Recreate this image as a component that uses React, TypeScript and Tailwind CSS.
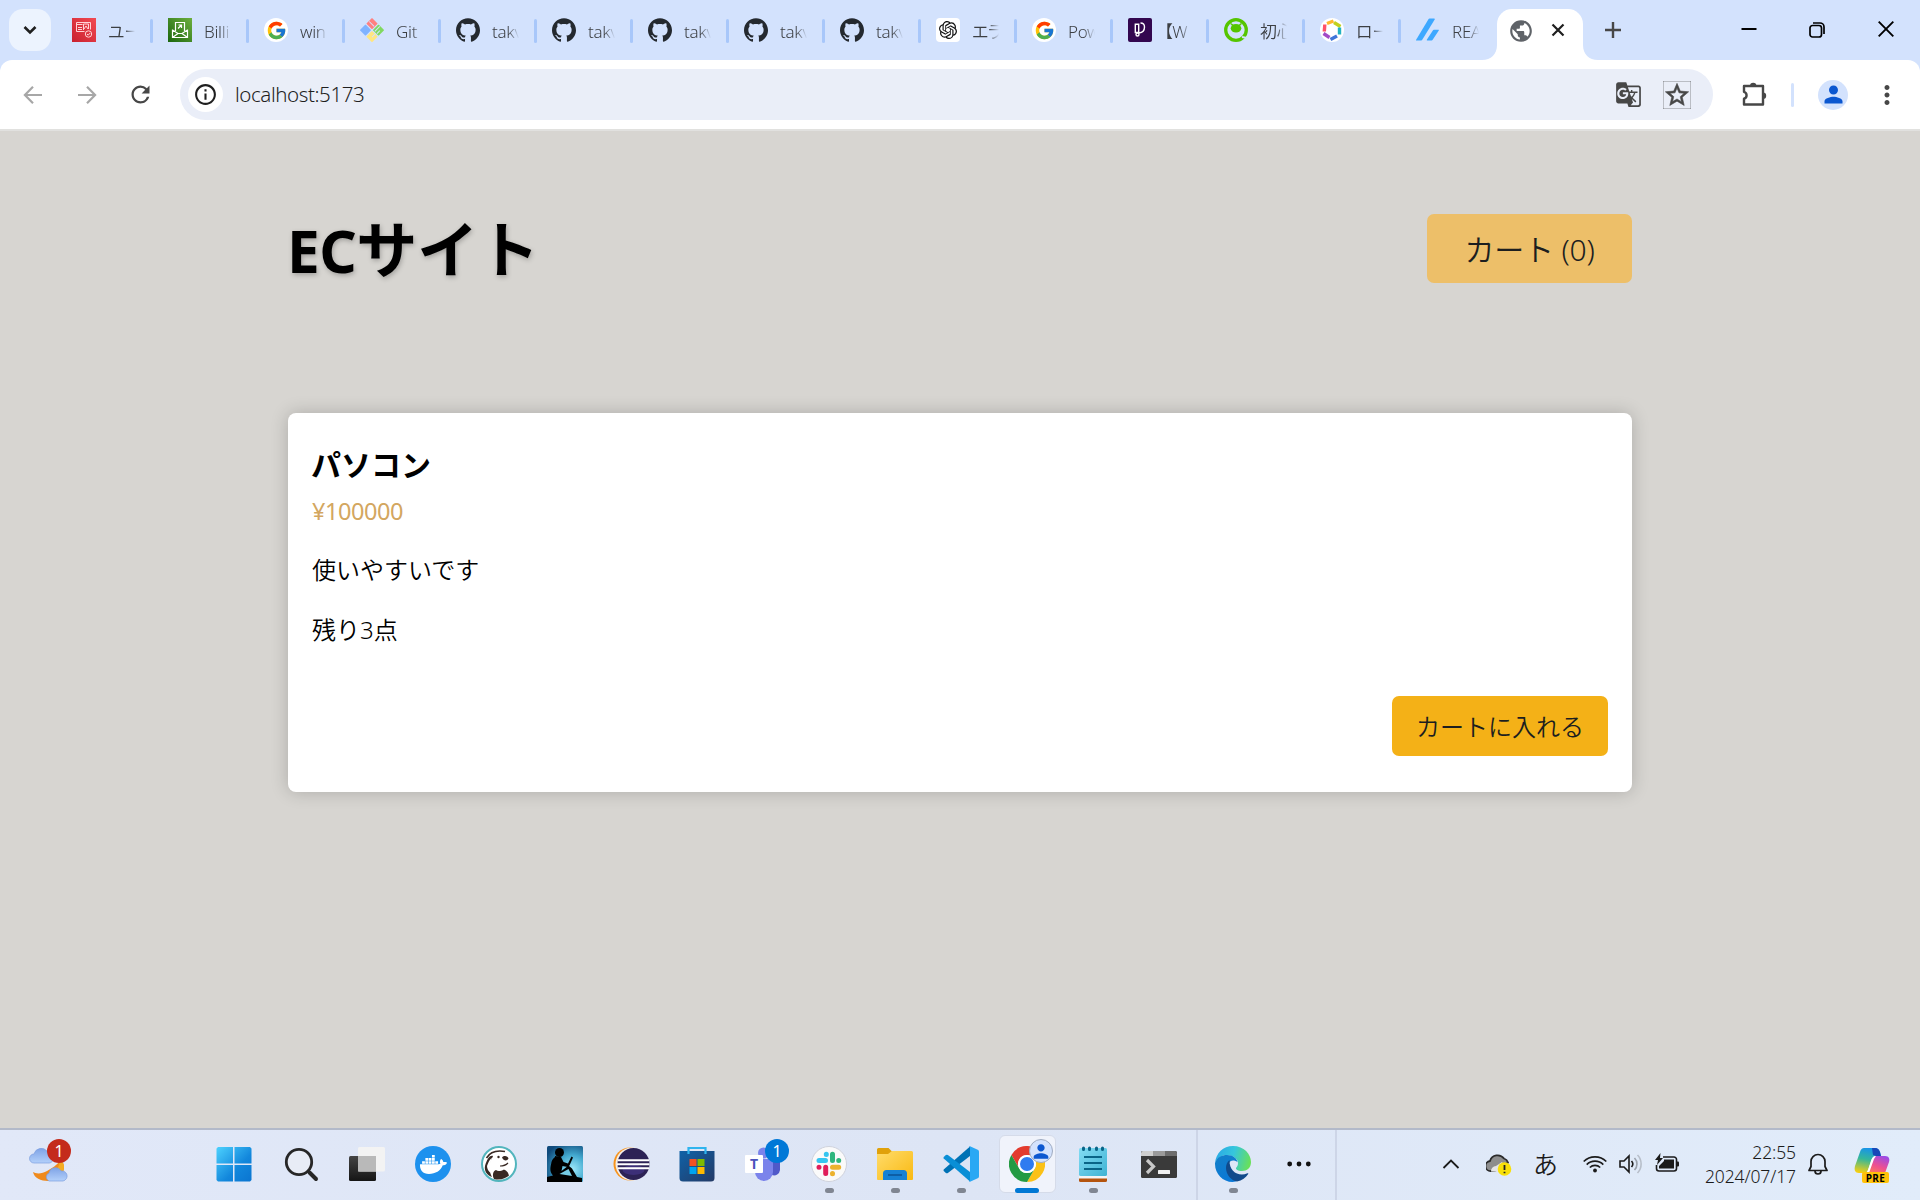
import type { ReactNode } from "react";
import { FcGoogle } from "react-icons/fc";
import { SiGithub, SiOpenai } from "react-icons/si";
import { FaDocker } from "react-icons/fa";
import {
  MdGTranslate,
  MdInfoOutline,
  MdMoreVert,
  MdPerson,
  MdPublic,
  MdRefresh,
  MdStarBorder,
} from "react-icons/md";

const White = ({ children }: { children: ReactNode }) => (
  <span className="flex size-6 items-center justify-center rounded-full bg-white">{children}</span>
);

const GoogleFav = () => (
  <White>
    <FcGoogle size={21} />
  </White>
);

const GithubFav = () => <SiGithub size={24} color="#24292f" />;

const UserFav = () => (
  <svg width="24" height="24" viewBox="0 0 24 24" fill="none" stroke="#ffd3d6" strokeWidth="1">
    <defs>
      <linearGradient id="userFav" x1="0" y1="1" x2="1" y2="0">
        <stop offset="0" stopColor="#c9202f" />
        <stop offset="1" stopColor="#f24a52" />
      </linearGradient>
    </defs>
    <rect width="24" height="24" fill="url(#userFav)" stroke="none" />
    <path d="M12.500 13.500H4.500v-9h14v7M4.500 6.500h6M6 9.500h4M6 11.500h4M11.500 12V6h5v5M12 11l2-3 2 3" />
    <circle cx="16.500" cy="16" r="3.200" />
    <path d="M15 16l1.200 1.200 2-2.200" />
  </svg>
);

const BillFav = () => (
  <svg width="24" height="24" viewBox="0 0 24 24" fill="none" stroke="#fff" strokeWidth="1.200">
    <defs>
      <linearGradient id="billFav" x1="0" y1="1" x2="1" y2="0">
        <stop offset="0" stopColor="#1b660f" />
        <stop offset="1" stopColor="#6cae3e" />
      </linearGradient>
    </defs>
    <rect width="24" height="24" fill="url(#billFav)" stroke="none" />
    <path d="M7.500 13V4.500h9V13M4.500 11.500v8h15v-8M4.500 12l5.500 3.500h4l5.500-3.500M4.500 19.500l5.500-4M19.500 19.500l-5.500-4M10 10.500l3.500-3.500M10.500 7h3v3" />
  </svg>
);

const GitFav = () => (
  <svg width="24" height="24" viewBox="0 0 24 24">
    <g transform="rotate(45 12 12)">
      <rect x="3.500" y="3.500" width="8" height="8" rx="0.500" fill="#80b3ff" transform="translate(0 9.200)" />
      <rect x="3.500" y="3.500" width="8" height="8" rx="0.500" fill="#ff8080" />
      <rect x="12.700" y="3.500" width="8" height="8" rx="0.500" fill="#80d960" />
      <rect x="12.700" y="12.700" width="8" height="8" rx="0.500" fill="#ffe680" />
      <path d="M4 8h7M15 4v7M18 7v4M17 13v4" stroke="#d3e2fd" strokeWidth="1" fill="none" />
    </g>
  </svg>
);

const OpenAiFav = () => (
  <span className="flex size-6 items-center justify-center rounded-[4px] bg-white">
    <SiOpenai size={18} color="#111" />
  </span>
);

const PurpleFav = () => (
  <svg width="24" height="24" viewBox="0 0 24 24" fill="none" stroke="#fff" strokeWidth="1.400">
    <rect width="24" height="24" rx="2" fill="#33074f" stroke="none" />
    <path d="M7.300 14.500V6.200h3.400v8.300zM12.500 5c3 0 4 1.600 4 4s-1.500 5.500-5.500 6" />
    <circle cx="9.500" cy="16.500" r="1.500" />
  </svg>
);

const QiitaFav = () => (
  <svg width="24" height="24" viewBox="0 0 24 24">
    <circle cx="12" cy="12" r="10.300" fill="none" stroke="#55c500" strokeWidth="3.300" />
    <ellipse cx="12" cy="10.300" rx="5.300" ry="4.300" fill="#55c500" />
    <path d="M6.500 5.500l3 2M17.500 5.500l-2.500 2" stroke="#55c500" strokeWidth="1.500" />
    <path d="M18 19l5 1" stroke="#d3e2fd" strokeWidth="1.800" />
  </svg>
);

const HexFav = () => (
  <White>
    <svg width="24" height="24" viewBox="0 0 24 24" strokeWidth="3.400" fill="none">
      <path d="M7 5.500L13.500 3" stroke="#ffb72b" />
      <path d="M14 4.500l6.500 4" stroke="#c2d11c" />
      <path d="M19.500 9.500v7" stroke="#22b2c2" />
      <path d="M17 18L10.500 21.500" stroke="#3f75d8" />
      <path d="M9.500 19.500L3.500 15.500" stroke="#a24bc6" />
      <path d="M4.300 13.500L4.800 6.500" stroke="#ff5168" />
    </svg>
  </White>
);

const ZennFav = () => (
  <svg width="24" height="24" viewBox="0 0 24 24" fill="#3ea8ff">
    <path d="M.300 22.500h4.900c.400 0 .700-.200.900-.500L18.700 1.400c.200-.400 0-.900-.500-.900h-4.700c-.300 0-.700.200-.900.500L0 22.100c-.100.200 0 .400.300.400z" />
    <path d="M16.500 22l6.300-9.400c.300-.500 0-.800-.400-.800h-4.600c-.300 0-.600.200-.8.500l-6.200 9.400c-.200.400 0 .8.400.8h4.500c.300 0 .600-.200.800-.500z" />
  </svg>
);

const TABS: { icon: ReactNode; title: string }[] = [
  { icon: <UserFav />, title: "ユー" },
  { icon: <BillFav />, title: "Billi" },
  { icon: <GoogleFav />, title: "win" },
  { icon: <GitFav />, title: "Git" },
  { icon: <GithubFav />, title: "takv" },
  { icon: <GithubFav />, title: "takv" },
  { icon: <GithubFav />, title: "takv" },
  { icon: <GithubFav />, title: "takv" },
  { icon: <GithubFav />, title: "takv" },
  { icon: <OpenAiFav />, title: "エラ" },
  { icon: <GoogleFav />, title: "Pow" },
  { icon: <PurpleFav />, title: "【W" },
  { icon: <QiitaFav />, title: "初心" },
  { icon: <HexFav />, title: "ロー" },
  { icon: <ZennFav />, title: "REA" },
];

function TabStrip() {
  return (
    <div className="flex h-[60px] bg-[#d3e2fd]">
      <div className="mt-[9px] ml-[9px] flex size-[42px] items-center justify-center rounded-[14px] bg-[#ecf3fe]">
        <svg width="14" height="10" viewBox="0 0 14 10" fill="none" stroke="#1f1f1f" strokeWidth="2.600">
          <path d="M1.500 2l5.500 5.500L12.500 2" />
        </svg>
      </div>
      <div className="ml-[6px] flex">
        {TABS.map((t, i) => (
          <div key={i} className="flex w-24 pt-[18px] pl-[15px]">
            <span className="size-6 shrink-0">{t.icon}</span>
            <span className="ml-3 h-7 w-[27px] overflow-hidden text-[17px] leading-[27px] font-[350] tracking-[-0.300px] whitespace-nowrap text-[#3c3f43] [font-feature-settings:'palt'] [mask-image:linear-gradient(to_right,#000_60%,transparent)]">
              {t.title}
            </span>
            {i < TABS.length - 1 && <span className="mt-px ml-[15px] h-6 w-[3px] shrink-0 rounded-sm bg-[#a8c7fa]" />}
          </div>
        ))}
      </div>
      <div className="-ml-[15px] flex w-[116px]">
        <svg width="15" height="60" viewBox="0 0 15 60">
          <path d="M0 60C9 60 15 54 15 45V60z" fill="#fff" />
        </svg>
        <div className="mt-[9px] flex w-[86px] items-start rounded-t-[15px] bg-white pt-[10px] pl-[11px]">
          <MdPublic size={26} color="#5f6368" className="-mt-[1px]" />
          <svg width="14" height="14" viewBox="0 0 14 14" className="mt-[4px] ml-[17px]" stroke="#1f1f1f" strokeWidth="2.200">
            <path d="M1.500 1.500l11 11M12.500 1.500l-11 11" />
          </svg>
        </div>
        <svg width="15" height="60" viewBox="0 0 15 60">
          <path d="M15 60C6 60 0 54 0 45V60z" fill="#fff" />
        </svg>
      </div>
      <svg width="16" height="16" viewBox="0 0 16 16" className="mt-[22px] ml-[7px]" stroke="#474747" strokeWidth="2.400">
        <path d="M8 0v16M0 8h16" />
      </svg>
      <svg width="16" height="16" viewBox="0 0 16 16" className="mt-[21px] ml-[120px]" stroke="#000" strokeWidth="2">
        <path d="M0.500 8h15" />
      </svg>
      <svg width="16" height="16" viewBox="0 0 16 16" className="mt-[22px] ml-[52px]" stroke="#000" strokeWidth="1.700" fill="none">
        <rect x="1" y="3.500" width="11.500" height="11.500" rx="2.500" />
        <path d="M4 1h7a4 4 0 0 1 4 4v7" />
      </svg>
      <svg width="16" height="16" viewBox="0 0 16 16" className="mt-[21px] ml-[53px]" stroke="#000" strokeWidth="1.900">
        <path d="M.700.700l14.600 14.600M15.300.700L.700 15.300" />
      </svg>
    </div>
  );
}

function Toolbar() {
  return (
    <div className="h-[71px] bg-[#d3e2fd]">
      <div className="flex h-[71px] items-center rounded-t-[12px] border-b-2 border-[#e1e1df] bg-white">
        <svg width="20" height="20" viewBox="0 0 20 20" className="ml-[23px]" stroke="#a7a7a7" strokeWidth="2.200" fill="none">
          <path d="M19 10H2.500M10 1.700L1.900 10l8.100 8.300" />
        </svg>
        <svg width="20" height="20" viewBox="0 0 20 20" className="ml-[34px]" stroke="#a7a7a7" strokeWidth="2.200" fill="none">
          <path d="M1 10h16.500M10 1.700l8.100 8.300-8.100 8.300" />
        </svg>
        <MdRefresh size={27} color="#474747" className="ml-[30px]" />
        <div className="ml-[26px] flex h-[51px] w-[1533px] items-center rounded-full bg-[#eaeef8] pl-2">
          <span className="flex size-[35px] items-center justify-center rounded-full bg-white">
            <MdInfoOutline size={25} color="#1f1f1f" />
          </span>
          <span className="-mt-[2px] ml-[12px] grow text-[20.500px] leading-[30px] font-[350] tracking-[-0.420px] text-[#1f1f1f]">
            localhost:5173
          </span>
          <MdGTranslate size={27} color="#474747" className="mr-[21px]" />
          <MdStarBorder size={28} color="#474747" stroke="#474747" strokeWidth={0.5} className="mr-[22px]" />
        </div>
        <svg width="26" height="26" viewBox="0 0 26 26" className="-mt-[2px] ml-[28px]">
          <path
            d="M3 5h19v18.500H3v-5.800a3.600 3.600 0 0 0 0-6.900z"
            fill="none"
            stroke="#474747"
            strokeWidth="2.400"
            strokeLinejoin="round"
          />
          <path d="M9 5a3.200 3.200 0 0 1 6.400 0zM22 11.500a3.200 3.200 0 0 1 0 6.400z" fill="#474747" />
        </svg>
        <span className="ml-[24px] h-6 w-[3px] rounded-sm bg-[#d3e2fd]" />
        <span className="ml-[24px] flex size-[30px] items-center justify-center rounded-full bg-[#d3e2fd]">
          <MdPerson size={27} color="#0b57d0" />
        </span>
        <MdMoreVert size={30} color="#474747" className="ml-[24px]" />
      </div>
    </div>
  );
}

function Shop() {
  return (
    <main className="h-[997px] bg-[#d7d5d1] px-[288px] pt-[83px] text-black">
      <header className="flex h-[69px] items-center justify-between">
        <h1 className="mt-[3px] -ml-px text-[58.500px] leading-[80px] font-bold tracking-[-0.500px] [text-shadow:1px_2px_5px_rgba(0,0,0,0.25)]">
          EC<span className="text-[61px] tracking-normal">サイト</span>
        </h1>
        <button className="flex h-[69px] w-[205px] items-center justify-center rounded-[7px] bg-[#edbf69] pt-px text-[30px] tracking-[-0.200px] text-[#1c1e1f] font-[350]">
          カート (0)
        </button>
      </header>
      <section className="mt-[130px] h-[379px] rounded-lg bg-white px-6 pt-[32px] shadow-[0_0_18px_rgba(0,0,0,0.2)]">
        <h2 className="-ml-px text-[30px] leading-[40px] font-bold">パソコン</h2>
        <p className="mt-[8px] text-[23.500px] leading-[36px] tracking-[-0.450px] text-[#d3a660]">¥100000</p>
        <p className="mt-[23px] text-[24px] leading-[36px] font-[350]">使いやすいです</p>
        <p className="mt-[24px] text-[24px] leading-[36px] font-[350]">残り3点</p>
        <div className="mt-[48px] flex justify-end">
          <button className="flex h-[60px] w-[216px] items-center justify-center rounded-[7px] bg-[#f4b117] pt-px text-[24px] text-[#1c1e1f] font-[350]">
            カートに入れる
          </button>
        </div>
      </section>
    </main>
  );
}

const StartIcon = () => (
  <svg width="36" height="36" viewBox="0 0 36 36" className="-ml-[3px]">
    <defs>
      <linearGradient id="winGrad" gradientUnits="userSpaceOnUse" x1="0" y1="0" x2="36" y2="36">
        <stop offset="0" stopColor="#4fd4ff" />
        <stop offset="0.600" stopColor="#1287dc" />
        <stop offset="1" stopColor="#0a74d0" />
      </linearGradient>
    </defs>
    <path fill="url(#winGrad)" d="M2 1h15v16.500H.500V2.500zM18.500 1H34l1.500 1.500v15h-17zM.500 19H17v16.500H2L.500 34zM18.500 19h17v15L34 35.500H18.500z" />
  </svg>
);

const SearchIcon = () => (
  <svg width="36" height="36" viewBox="0 0 36 36" fill="none" stroke="#272727" strokeLinecap="round">
    <circle cx="16" cy="16" r="12.700" strokeWidth="2.800" fill="#e8ecf6" />
    <path d="M26.500 26.500l6.500 6.500" strokeWidth="4" />
  </svg>
);

const TaskViewIcon = () => (
  <svg width="36" height="36" viewBox="0 0 36 36">
    <defs>
      <linearGradient id="tvDark" x1="0" y1="0" x2="0" y2="1">
        <stop offset="0" stopColor="#444" />
        <stop offset="1" stopColor="#151515" />
      </linearGradient>
    </defs>
    <rect x="0" y="10" width="27" height="25" rx="1.500" fill="url(#tvDark)" />
    <rect x="9" y="1" width="27" height="24.500" rx="1.500" fill="#f3f3f3" />
    <rect x="9" y="10" width="18" height="15.500" fill="#b9b9b9" />
  </svg>
);

const DockerIcon = () => (
  <span className="flex size-9 items-center justify-center rounded-full bg-[#1d91ee]">
    <FaDocker size={27} color="#fff" />
  </span>
);

const DBeaverIcon = () => (
  <svg width="36" height="36" viewBox="0 0 36 36">
    <circle cx="18" cy="18" r="17" fill="#fff" stroke="#52b5bd" strokeWidth="2" />
    <path d="M13 33c-2-4-1-8 2-9 2 2 5 1 8-.500 2 1 4 2 5 6-3 3-9 5-15 3.500z" fill="#382923" />
    <path d="M4 20c2-6 4-11 8-10-1 3-4 6-3.500 12 .300 4 1 6 2.500 9-5-2-8-6-7-11z" fill="#382923" />
    <path d="M21 11.500c2-2.500 6-1.500 6.500 1-1.500 3-5 2.500-6.500-1z" fill="#382923" />
    <path d="M5.500 12C9 6 15 4 24 5.500" fill="none" stroke="#382923" strokeWidth="1.600" />
    <path d="M6 20c2-5 3-7 5-8-1.500 5-2.500 8-1.500 15-2-2-3.500-4-3.500-7z" fill="#fff" />
    <path d="M19 20c3 0 6-1 8-3" fill="none" stroke="#382923" strokeWidth="1.200" />
    <circle cx="17.500" cy="11" r="1.200" fill="#382923" />
  </svg>
);

const KindleIcon = () => (
  <svg width="36" height="36" viewBox="0 0 36 36">
    <defs>
      <radialGradient id="kindle" cx="0.700" cy="0.650" r="0.800">
        <stop offset="0" stopColor="#9fe9fb" />
        <stop offset="0.500" stopColor="#43a9cf" />
        <stop offset="1" stopColor="#0f4a7c" />
      </radialGradient>
    </defs>
    <rect width="36" height="36" rx="1.500" fill="url(#kindle)" />
    <circle cx="12.500" cy="6.500" r="4.500" />
    <path d="M8 10l6 1 2.500 5 4.500 1.500 3.500-7 1.500 1-3.500 8-2 1.500-5-1-1 5 7-5.500 3.500 3 5 8.500 5 1v4H0v-5l6-1.500c-3-3-3-7-2-11 .500-4 2-6 4-7.500z" />
    <path d="M12.500 28l9-5 3.500 7z" fill="#75cbe4" />
  </svg>
);

const EclipseIcon = () => (
  <svg width="37" height="36" viewBox="0 0 37 36">
    <circle cx="17" cy="18" r="16.500" fill="#f7941e" />
    <circle cx="19" cy="18" r="16.500" fill="#f4efe9" />
    <circle cx="20.500" cy="18" r="16" fill="#2c2255" />
    <ellipse cx="20.500" cy="24" rx="11" ry="5" fill="#3c2f78" />
    <path d="M5 14.200h31M4 18.200h32.500M5 22.200h31" stroke="#fff" strokeWidth="1.900" />
  </svg>
);

const StoreIcon = () => (
  <svg width="36" height="36" viewBox="0 0 36 36">
    <defs>
      <linearGradient id="store" x1="0" y1="0" x2="1" y2="1">
        <stop offset="0" stopColor="#0f62a8" />
        <stop offset="1" stopColor="#243a66" />
      </linearGradient>
    </defs>
    <path d="M.500 5h35v27a3.500 3.500 0 0 1-3.500 3.500H4A3.500 3.500 0 0 1 .500 32z" fill="url(#store)" />
    <path d="M9.500 8V2h17v6" fill="none" stroke="#2fb4ee" strokeWidth="2.200" />
    <rect x="10.500" y="13" width="7" height="7" fill="#f25022" />
    <rect x="18.500" y="13" width="7" height="7" fill="#7fba00" />
    <rect x="10.500" y="21" width="7" height="7" fill="#00a4ef" />
    <rect x="18.500" y="21" width="7" height="7" fill="#ffb900" />
  </svg>
);

const TeamsIcon = () => (
  <span className="relative block size-9">
    <svg width="36" height="36" viewBox="0 0 36 36">
      <circle cx="18.500" cy="7" r="5.500" fill="#7b83eb" />
      <path d="M24 12h11v12a6 6 0 0 1-8 5z" fill="#5059c9" />
      <path d="M10 13h18v13a9 9 0 0 1-18 0z" fill="#7b83eb" />
      <rect x="0" y="9" width="18" height="18" rx="1" fill="#fff" />
    </svg>
    <span className="absolute top-[9px] left-0 w-[18px] text-center font-['Open_Sans'] text-[14px] leading-[18px] font-bold text-[#4b53bc]">T</span>
    <span className="absolute -top-[7px] left-[20px] flex size-6 items-center justify-center rounded-full bg-[#0078d7] text-[16px] leading-none text-white">1</span>
  </span>
);

const SlackIcon = () => (
  <svg width="36" height="36" viewBox="0 0 36 36">
    <circle cx="18" cy="18" r="17.500" fill="#fafafa" stroke="#cfd2dc" />
    <g strokeWidth="5" strokeLinecap="round">
      <path d="M8 14.500h6.500M15.300 8.300v.100" stroke="#36c5f0" />
      <path d="M21.500 8.300v6.200M27.700 14.500v.050" stroke="#2eb67d" />
      <path d="M21.500 21.200h6.200M21.500 27.600v.050" stroke="#ecb22e" />
      <path d="M14.700 21.200v6.400M8 21.200v.050" stroke="#e01e5a" />
    </g>
  </svg>
);

const FolderIcon = () => (
  <svg width="36" height="36" viewBox="0 0 36 36">
    <defs>
      <linearGradient id="folder" x1="0" y1="0" x2="1" y2="1">
        <stop offset="0" stopColor="#ffdc6b" />
        <stop offset="1" stopColor="#f9b912" />
      </linearGradient>
    </defs>
    <path d="M0 3.500A1.500 1.500 0 0 1 1.500 2h10l4 4v6H0z" fill="#e0a10a" />
    <path d="M0 8h11l4-3h19.500A1.500 1.500 0 0 1 36 6.500V33a1 1 0 0 1-1 1H1a1 1 0 0 1-1-1z" fill="url(#folder)" />
    <path d="M6 34v-6.500a3.500 3.500 0 0 1 3.500-3.500h17a3.500 3.500 0 0 1 3.500 3.500V34z" fill="#1681d4" />
    <path d="M11 29h14" stroke="#0c5699" strokeWidth="1.600" />
  </svg>
);

const VsCodeIcon = () => (
  <svg width="36" height="36" viewBox="0 0 36 36">
    <path d="M27 .500L.700 23.500a1.500 1.500 0 0 0 0 1.500l2.200 2a1.700 1.700 0 0 0 2 0L27 10z" fill="#0072b5" />
    <path d="M27 35.500L.700 12.500a1.500 1.500 0 0 1 0-1.500l2.200-2a1.700 1.700 0 0 1 2 0L27 26z" fill="#0a8fd6" />
    <path d="M26.500 0l8.200 3.700c.800.400 1.300 1.200 1.300 2V30.300c0 .800-.500 1.600-1.300 2L26.500 36c-.800 0 .500-.500.500-2V2c0-1.300-1.300-2-.500-2z" fill="#29a8f4" />
  </svg>
);

const ChromeIcon = () => (
  <span className="relative flex h-[58px] w-[57px] items-center justify-center rounded-[6px] border border-[#d5dbe9] bg-[#f0f3fb]">
    <svg width="36" height="36" viewBox="0 0 36 36">
      <path d="M2.400 9A18 18 0 0 1 33.600 9H18a9 9 0 0 0-7.800 13.500z" fill="#e33b2e" />
      <path d="M18 9h15.600A18 18 0 0 1 18 36l7.800-13.500A9 9 0 0 0 18 9z" fill="#fbc116" />
      <path d="M2.400 9l7.800 13.500A9 9 0 0 0 25.800 22.500L18 36A18 18 0 0 1 2.400 9z" fill="#249a43" />
      <circle cx="18" cy="18" r="9.100" fill="#fff" />
      <circle cx="18" cy="18" r="7" fill="#2f7bf0" />
    </svg>
    <span className="absolute top-[3px] left-[29px] flex size-6 items-center justify-center rounded-full border border-[#9fabc0] bg-[#d3e2fd]">
      <MdPerson size={23} color="#0b57d0" />
    </span>
  </span>
);

const NotepadIcon = () => (
  <svg width="28" height="36" viewBox="0 0 28 36">
    <defs>
      <linearGradient id="notepad" x1="0" y1="0" x2="1" y2="1">
        <stop offset="0" stopColor="#83dcf4" />
        <stop offset="1" stopColor="#3fb3d3" />
      </linearGradient>
    </defs>
    <rect x="0" y="28" width="28" height="8" rx="1.500" fill="#b4540f" />
    <rect x="0" y="28" width="28" height="4.500" fill="#f4f4f4" />
    <rect x="0" y="2" width="28" height="28" rx="1.500" fill="url(#notepad)" />
    <path d="M4.500 2v1.500M10.500 2v1.500M17.500 2v1.500M23.500 2v1.500" stroke="#0a6487" strokeWidth="3" strokeLinecap="round" />
    <path d="M5 11h18M5 17h18M5 23h18" stroke="#0a6487" strokeWidth="2" />
  </svg>
);

const TerminalIcon = () => (
  <svg width="36" height="27" viewBox="0 0 36 27">
    <rect width="36" height="27" rx="1.500" fill="#3a3a3a" />
    <path d="M1.500 0H12v5H0V1.500z" fill="#cfcfcf" />
    <path d="M12 0h12v5H12z" fill="#9a9a9a" />
    <path d="M24 0h10.500L36 1.500V5H24z" fill="#6d6d6d" />
    <path d="M6 9l6.500 6.500L6 22" stroke="#c9c9c9" strokeWidth="3.200" fill="none" />
    <rect x="17" y="19" width="12" height="4" rx="0.500" fill="#f0f0f0" />
  </svg>
);

const EdgeIcon = () => (
  <svg width="36" height="36" viewBox="0 0 36 36">
    <defs>
      <linearGradient id="edgeTop" x1="0" y1="0.300" x2="1" y2="0.500">
        <stop offset="0" stopColor="#2aa9e6" />
        <stop offset="0.500" stopColor="#36c6dc" />
        <stop offset="1" stopColor="#68e05a" />
      </linearGradient>
      <linearGradient id="edgeLeft" x1="0" y1="0" x2="0.500" y2="1">
        <stop offset="0" stopColor="#1480c8" />
        <stop offset="1" stopColor="#0a78d6" />
      </linearGradient>
    </defs>
    <path d="M0 17C1 7 8 0 18 0c11 0 18 8 18 16 0 6-4 9-9 9-4 0-6.500-1.500-6-3 1-1.500 2-2.500 2-5 0-4-5-8-11-8C7 9 2 12 0 17z" fill="url(#edgeTop)" />
    <path d="M0 17C2 11 7 9 12 9c6 0 10 3.500 10.500 7-7-4-9 1-9 5 0 7 6 11 10 13-2 1.300-4 2-6 2C8 36 0 28 0 18z" fill="url(#edgeLeft)" />
    <path d="M14.500 14C12 16 11 19 11 22c0 7 6 13 11 13.500 5-1 9-4 11.200-7.500.300-.600-.200-1-.800-.700C24 31 14 26 14.500 14z" fill="#114a8b" />
  </svg>
);

const DotsIcon = () => (
  <svg width="24" height="6" viewBox="0 0 24 6" fill="#111">
    <circle cx="2.700" cy="3" r="2.400" />
    <circle cx="12" cy="3" r="2.400" />
    <circle cx="21.300" cy="3" r="2.400" />
  </svg>
);

const APPS: { icon: ReactNode; mark?: "run" | "active" }[] = [
  { icon: <StartIcon /> },
  { icon: <SearchIcon /> },
  { icon: <TaskViewIcon /> },
  { icon: <DockerIcon /> },
  { icon: <DBeaverIcon /> },
  { icon: <KindleIcon /> },
  { icon: <EclipseIcon /> },
  { icon: <StoreIcon /> },
  { icon: <TeamsIcon /> },
  { icon: <SlackIcon />, mark: "run" },
  { icon: <FolderIcon />, mark: "run" },
  { icon: <VsCodeIcon />, mark: "run" },
  { icon: <ChromeIcon />, mark: "active" },
  { icon: <NotepadIcon />, mark: "run" },
  { icon: <TerminalIcon /> },
];

function AppCell({ icon, mark }: { icon: ReactNode; mark?: "run" | "active" }) {
  return (
    <div className="relative flex h-[68px] w-[66px] items-center justify-center">
      {icon}
      {mark === "run" && <span className="absolute top-[58px] left-[29px] h-[5px] w-[9px] rounded-full bg-[#808692]" />}
      {mark === "active" && <span className="absolute top-[58px] left-[21px] h-[5px] w-6 rounded-full bg-[#0078d4]" />}
    </div>
  );
}

function WeatherIcon() {
  return (
    <div className="relative mt-[14px] ml-[29px] h-[45px] w-[44px]">
      <svg width="44" height="45" viewBox="0 0 44 45">
        <defs>
          <linearGradient id="cloud" x1="0" y1="0" x2="0" y2="1">
            <stop offset="0" stopColor="#7fa3e6" />
            <stop offset="1" stopColor="#b3d0fa" />
          </linearGradient>
        </defs>
        <path d="M4 28c3 2 9 2 14-1s10-6 13-10c4 1 5 6 3 11-3 6-8 9-15 9S5 34 4 28z" fill="#ef8a1d" />
        <path d="M31 17c4 0 5 6 3 11l-10 1c4-3 6-6 7-12z" fill="#f4ac22" />
        <path d="M5 19a4.500 4.500 0 0 1 0-9 7.500 7.500 0 0 1 13-3c4 0 6 3 5 6 2 3 0 6-3 6z" fill="url(#cloud)" stroke="#7d9fdf" strokeWidth=".7" />
        <path d="M20 37a4.300 4.300 0 0 1 0-8 6.500 6.500 0 0 1 12-2 5 5 0 0 1 2 10z" fill="url(#cloud)" stroke="#7d9fdf" strokeWidth=".7" />
      </svg>
      <span className="absolute -top-[5px] left-[18px] flex size-6 items-center justify-center rounded-full bg-[#c42b1c] text-[16px] leading-none text-white">1</span>
    </div>
  );
}

function Tray() {
  return (
    <div className="ml-auto flex h-[70px] w-[484px] pt-px">
      <svg width="18" height="12" viewBox="0 0 18 12" className="mt-[27px] ml-[6px]" fill="none" stroke="#1b1b1b" strokeWidth="1.800">
        <path d="M1.500 10L9 2.500 16.500 10" />
      </svg>
      <svg width="26" height="24" viewBox="0 0 26 24" className="mt-[22px] ml-[26px]">
        <path d="M5 18a5 5 0 0 1-1-10 8 8 0 0 1 14-2.500 6 6 0 0 1 4 4L9 18z" fill="#8d8d8d" stroke="#2a2a2a" strokeWidth="1.800" />
        <path d="M5 18.500a5 5 0 0 1 5-5.500l6-4 4 6-6 4z" fill="#e5e5e5" />
        <circle cx="18.500" cy="16" r="6.800" fill="#f8e008" />
        <path d="M18.500 12v5M18.500 18.700v1.600" stroke="#222" strokeWidth="1.800" />
      </svg>
      <span className="mt-[16px] ml-[21px] w-[26px] text-[25px] leading-[34px] font-[350] text-[#1b1b1b]">あ</span>
      <svg width="24" height="18" viewBox="0 0 24 18" className="mt-[24px] ml-[24px]" fill="none" stroke="#1b1b1b" strokeWidth="1.600">
        <path d="M.700 6.500a16 16 0 0 1 22.600 0M3.700 9.600a11.700 11.700 0 0 1 16.600 0M6.800 12.500a7.400 7.400 0 0 1 10.400 0" />
        <circle cx="12" cy="15.500" r="1.900" fill="#1b1b1b" stroke="none" />
      </svg>
      <svg width="25" height="22" viewBox="0 0 25 22" className="mt-[22px] ml-[12px]" fill="none" stroke="#1b1b1b" strokeWidth="1.600">
        <path d="M1 8h4l5-5v16l-5-5H1z" />
        <path d="M12.500 8a4.500 4.500 0 0 1 0 6" />
        <path d="M15.500 5a8.500 8.500 0 0 1 0 12" stroke="#9aa1ab" />
        <path d="M18.500 2a13 13 0 0 1 0 18" stroke="#b7bec9" />
      </svg>
      <svg width="25" height="20" viewBox="0 0 25 20" className="mt-[22px] ml-[11px]" fill="none" stroke="#1b1b1b" strokeWidth="1.600">
        <path d="M8 4h11a2.500 2.500 0 0 1 2.500 2.500v9a2.500 2.500 0 0 1-2.500 2.500H4a2.500 2.500 0 0 1-2.500-2.500V12" />
        <path d="M9 6.500h10v9H4V13l5-5z" fill="#1b1b1b" stroke="none" />
        <path d="M22 8.500h1a1 1 0 0 1 1 1v3a1 1 0 0 1-1 1h-1z" fill="#1b1b1b" stroke="none" />
        <path d="M5.500 0L0 7h3l-1 5 6-7H5z" fill="#1b1b1b" stroke="none" />
      </svg>
      <div className="mt-[9px] w-[116px] text-right text-[17.500px] leading-[24px] font-[350] tracking-[-0.100px] text-[#1b1b1b]">
        <div>22:55</div>
        <div>2024/07/17</div>
      </div>
      <svg width="20" height="23" viewBox="0 0 20 23" className="mt-[22px] ml-[12px]" fill="none" stroke="#1b1b1b" strokeWidth="1.700">
        <path d="M1 17.500l2-4V8.500a7 7 0 0 1 14 0v5l2 4z" strokeLinejoin="round" />
        <path d="M7 18a3 3 0 0 0 6 0" />
      </svg>
      <div className="relative mt-[16px] ml-[26px] size-9">
        <svg width="36" height="36" viewBox="0 0 36 36">
          <defs>
            <linearGradient id="copLeft" x1="0.500" y1="0" x2="0.300" y2="1">
              <stop offset="0" stopColor="#1793ea" />
              <stop offset="0.450" stopColor="#35b79a" />
              <stop offset="1" stopColor="#f7cf10" />
            </linearGradient>
            <linearGradient id="copRight" x1="0.800" y1="0" x2="0.300" y2="1">
              <stop offset="0" stopColor="#9a4be8" />
              <stop offset="0.500" stopColor="#ee5090" />
              <stop offset="1" stopColor="#ff8a4a" />
            </linearGradient>
          </defs>
          <path d="M10 1h11c3 0 4 2 5 4l1 4h-5c-3 0-4 2-5 5l-3 9c-1 2-2 3-4 3H5c-4 0-5-3-4-7L6 5c1-3 2-4 4-4z" fill="url(#copLeft)" />
          <path d="M18 1h3c3 0 4 2 5 4l1 4h-5l-3-1z" fill="#1647b8" />
          <path d="M22 9h9c4 0 5 3 4 6l-4 11c-1 2-2 3-4 3H9c3 0 5-2 6-5l3-10c1-3 2-5 4-5z" fill="url(#copRight)" />
          <path d="M22 9c-3 0-4 2-5 5l-3 9c-1 2-1 3-3 3h4l5-14z" fill="#fff" />
        </svg>
        <span className="absolute top-[25px] left-[8px] flex h-[11px] w-[27px] items-center justify-center rounded-[2px] bg-[#ffc20a] font-['Open_Sans'] text-[10px] leading-none font-bold tracking-[0.400px] text-black">
          PRE
        </span>
      </div>
    </div>
  );
}

function Taskbar() {
  return (
    <footer className="flex h-[72px] border-t-2 border-[#b2b9c9] bg-linear-to-r from-[#e1e8f8] via-[#dde5f5] to-[#e1ecfa]">
      <WeatherIcon />
      <div className="ml-[129px] flex">
        {APPS.map((a, i) => (
          <AppCell key={i} icon={a.icon} mark={a.mark} />
        ))}
      </div>
      <span className="ml-[4px] h-[70px] w-[2px] bg-[#cdd5e7]" />
      <div className="ml-[2px] flex">
        <AppCell icon={<EdgeIcon />} mark="run" />
        <AppCell icon={<DotsIcon />} />
      </div>
      <span className="ml-[3px] h-[70px] w-[2px] bg-[#cdd5e7]" />
      <Tray />
    </footer>
  );
}

export default function App() {
  return (
    <div className="h-[1200px] w-[1920px] overflow-hidden font-['Noto_Sans','Noto_Sans_CJK_JP',sans-serif]">
      <TabStrip />
      <Toolbar />
      <Shop />
      <Taskbar />
    </div>
  );
}
